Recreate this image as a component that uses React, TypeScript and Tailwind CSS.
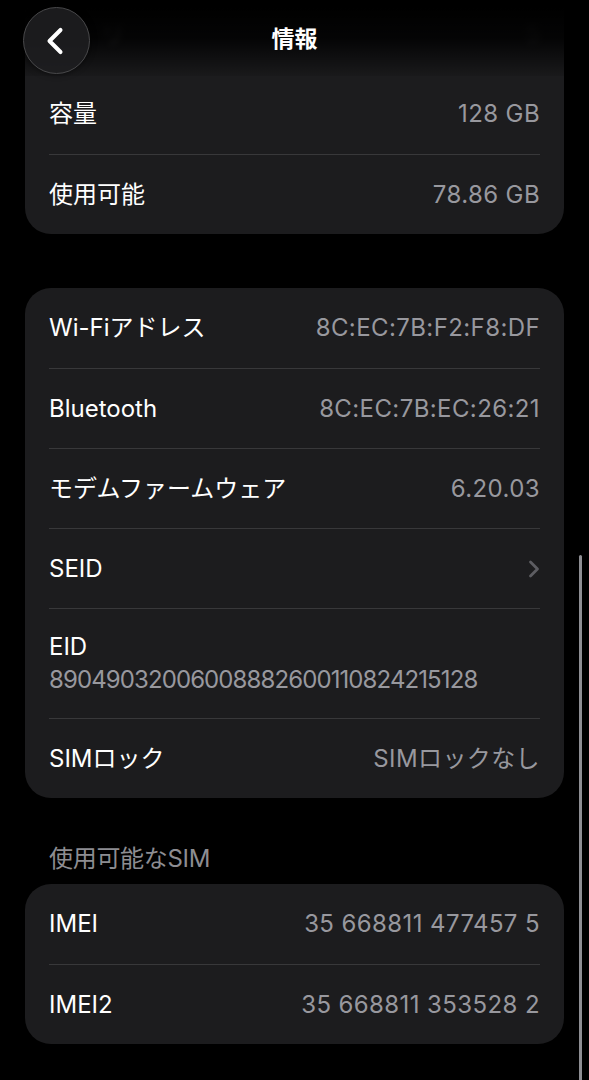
import { ChevronLeft, ChevronRight } from "lucide-react";

type Row = { label: string; value?: string; chevron?: boolean; sub?: string };

const storage: Row[] = [
  { label: "容量", value: "128 GB" },
  { label: "使用可能", value: "78.86 GB" },
];

const network: Row[] = [
  { label: "Wi-Fiアドレス", value: "8C:EC:7B:F2:F8:DF" },
  { label: "Bluetooth", value: "8C:EC:7B:EC:26:21" },
  { label: "モデムファームウェア", value: "6.20.03" },
  { label: "SEID", chevron: true },
  { label: "EID", sub: "89049032006008882600110824215128" },
  { label: "SIMロック", value: "SIMロックなし" },
];

const sims: Row[] = [
  { label: "IMEI", value: "35 668811 477457 5" },
  { label: "IMEI2", value: "35 668811 353528 2" },
];

function Card({ rows, top }: { rows: Row[]; top?: boolean }) {
  return (
    <div className={`mx-[25px] rounded-[26px] bg-[#1c1c1e] px-6 ${top ? "rounded-t-none" : ""}`}>
      {rows.map((row, i) => {
        const line = i > 0 ? "border-t border-[#38383a]" : "";
        return row.sub ? (
          <div key={row.label} className={`flex h-[110px] flex-col justify-center gap-[5px] ${line}`}>
            <span className="text-[24px] leading-7 text-white">{row.label}</span>
            <span className="text-[24px] leading-7 tracking-[-0.9px] text-[#98989e]">{row.sub}</span>
          </div>
        ) : (
          <div key={row.label} className={`flex h-[80px] items-center justify-between ${line}`}>
            <span className="text-[24px] text-white">{row.label}</span>
            {row.chevron ? (
              <ChevronRight className="-mr-[8px] h-7 w-7 text-[#5d5d62]" strokeWidth={2.4} />
            ) : (
              <span className="text-[24px] tracking-[0.4px] text-[#98989e]">{row.value}</span>
            )}
          </div>
        );
      })}
    </div>
  );
}

export default function App() {
  return (
    <div
      className="relative h-[1080px] w-[589px] overflow-hidden bg-black"
      style={{ fontFamily: 'Inter, "Noto Sans CJK JP", sans-serif' }}
    >
      {/* row scrolled under the header */}
      <div className="mx-[25px] mt-[-6px] flex h-[80px] items-center justify-between bg-[#1c1c1e] px-6 text-[24px]">
        <span className="pl-[52px] text-[#6a6a6e] blur-[3px]">リ</span>
        <span className="text-[#4a4a4e] blur-[3px]">5</span>
      </div>
      <Card rows={storage} top />

      <div className="h-[54px]" />
      <Card rows={network} />

      <div className="px-[49px] pb-[9px] pt-[45px] text-[24px] leading-8 tracking-[-0.3px] text-[#8d8d92]">使用可能なSIM</div>
      <Card rows={sims} />

      {/* header overlay */}
      <div className="absolute inset-x-0 top-0 flex h-[76px] items-center justify-center bg-gradient-to-b from-black from-10% via-black/85 to-black/10">
        <button
          type="button"
          className="absolute left-[23px] top-[7px] flex h-[67px] w-[67px] items-center justify-center rounded-full border border-[#48484a] bg-[#1e1e20]/90 shadow-[0_0_6px_rgba(0,0,0,0.6)]"
        >
          <ChevronLeft className="-ml-[3px] h-11 w-11 text-white" strokeWidth={2.2} />
        </button>
        <span className="mt-[2px] text-[23px] font-bold text-white">情報</span>
      </div>

      {/* scroll indicator */}
      <div className="absolute right-[7px] top-[555px] h-[540px] w-[3px] rounded-full bg-[#8e8e93]" />
    </div>
  );
}
